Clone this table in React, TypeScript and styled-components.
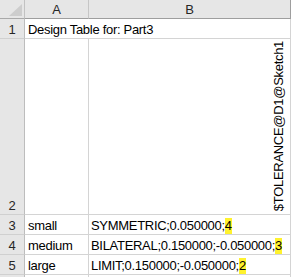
import styled, { createGlobalStyle } from "styled-components";
import React from "react";

const GlobalStyle = createGlobalStyle`
  body {
    margin: 0;
    background: #ffffff;
    font-family: "Liberation Sans", Arial, sans-serif;
    overflow: hidden;
  }
`;

const Sheet = styled.div`
  display: grid;
  grid-template-columns: 25px 64px 202px;
  grid-template-rows: 19px 20px 176px 20px 20px 20px 20px;
  width: 291px;
  height: 100vh;
  overflow: hidden;
  font-size: 13px;
  letter-spacing: -0.3px;
  color: #000;
  & > * {
    box-sizing: border-box;
  }
`;

const Corner = styled.div`
  background: #e6e6e6;
  border-right: 1px solid #c2c2c2;
  border-bottom: 1px solid #a9a9a9;
  display: flex;
  justify-content: flex-end;
  align-items: flex-end;
  padding: 0 2px 2px 0;
`;

const ColHeader = styled.div<{ $last?: boolean }>`
  background: #e6e6e6;
  border-right: 1px solid ${(p) => (p.$last ? "#9e9e9e" : "#c6c6c6")};
  border-bottom: 1px solid #9e9e9e;
  display: flex;
  justify-content: center;
  align-items: flex-end;
  line-height: 16px;
  color: #262626;
`;

const RowHeader = styled.div`
  background: #e6e6e6;
  border-right: 1px solid #bdbdbd;
  border-bottom: 1px solid #d0d0d0;
  display: flex;
  justify-content: center;
  align-items: flex-end;
  line-height: 16px;
  color: #262626;
`;

const Cell = styled.div<{ $span?: number; $pad?: number }>`
  grid-column: span ${(p) => p.$span ?? 1};
  background: #fff;
  border-right: 1px solid #d4d4d4;
  border-bottom: 1px solid #d4d4d4;
  display: flex;
  align-items: flex-end;
  padding-left: ${(p) => p.$pad ?? 3}px;
  line-height: 16px;
  white-space: nowrap;
`;

const VerticalCell = styled(Cell)`
  justify-content: flex-end;
  padding: 0 3px 3px 0;
`;

const VerticalText = styled.span`
  writing-mode: vertical-rl;
  transform: rotate(180deg);
  line-height: 16px;
`;

const Mark = styled.span`
  background: #fff22e;
`;

const rows = [
  { n: 3, name: "small", value: "SYMMETRIC;0.050000;", mark: "4" },
  { n: 4, name: "medium", value: "BILATERAL;0.150000;-0.050000;", mark: "3" },
  { n: 5, name: "large", value: "LIMIT;0.150000;-0.050000;", mark: "2" },
];

export default function App() {
  return (
    <>
      <GlobalStyle />
      <Sheet>
        <Corner>
          <svg width="13" height="12" viewBox="0 0 13 12">
            <polygon points="13,0 13,12 0,12" fill="#cdcdcd" />
          </svg>
        </Corner>
        <ColHeader>A</ColHeader>
        <ColHeader $last>B</ColHeader>

        <RowHeader>1</RowHeader>
        <Cell $span={2}>Design Table for: Part3</Cell>

        <RowHeader>2</RowHeader>
        <Cell />
        <VerticalCell>
          <VerticalText>$TOLERANCE@D1@Sketch1</VerticalText>
        </VerticalCell>

        {rows.map((r) => (
          <React.Fragment key={r.n}>
            <RowHeader>{r.n}</RowHeader>
            <Cell>{r.name}</Cell>
            <Cell $pad={2}>
              {r.value}
              <Mark>{r.mark}</Mark>
            </Cell>
          </React.Fragment>
        ))}

        <RowHeader />
        <Cell />
        <Cell />
      </Sheet>
    </>
  );
}
